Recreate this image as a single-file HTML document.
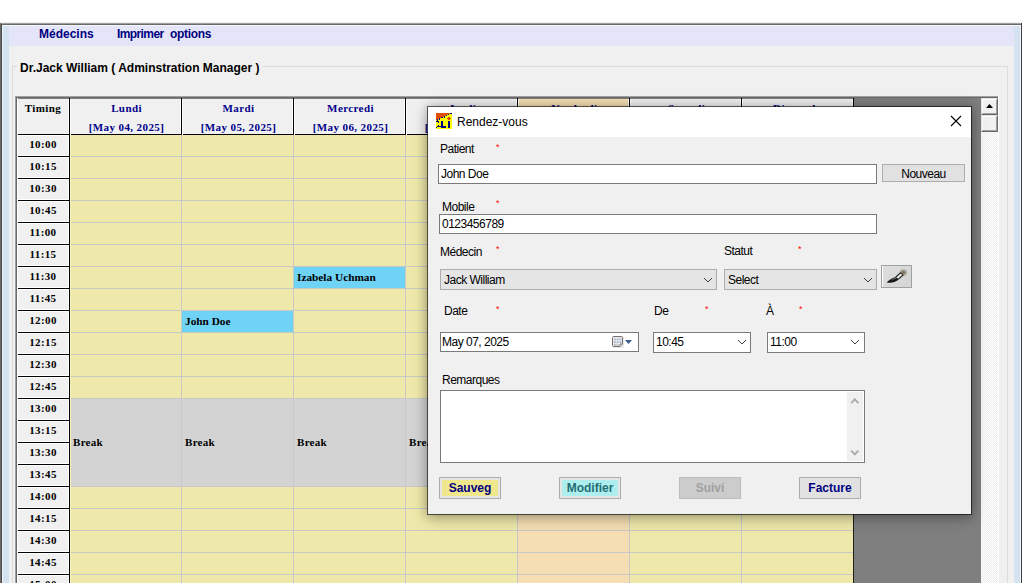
<!DOCTYPE html>
<html><head><meta charset="utf-8"><style>
html,body{margin:0;padding:0;}
body{width:1022px;height:583px;overflow:hidden;position:relative;background:#fff;font-family:"Liberation Sans",sans-serif;}
div{box-sizing:border-box;}
.s{font-family:"Liberation Serif",serif;font-weight:bold;font-size:11px;line-height:14px;position:absolute;white-space:pre;}
.l{font-family:"Liberation Sans",sans-serif;font-size:12px;letter-spacing:-0.5px;line-height:14px;position:absolute;white-space:pre;color:#000;}
.ast{position:absolute;color:#ff0000;font-family:"Liberation Sans",sans-serif;font-size:9px;line-height:9px;}
</style></head><body>

<div style="position:absolute;left:0px;top:22px;width:1022px;height:1px;background:#f0f0f0"></div>
<div style="position:absolute;left:0px;top:23px;width:1022px;height:1px;background:#a0a0a0"></div>
<div style="position:absolute;left:0px;top:23px;width:1px;height:560px;background:#6a6a6a"></div>
<div style="position:absolute;left:1px;top:24px;width:1020px;height:1px;background:#696969"></div>
<div style="position:absolute;left:1px;top:24px;width:1px;height:559px;background:#4a4a4a"></div>
<div style="position:absolute;left:1021px;top:23px;width:1px;height:560px;background:#404040"></div>
<div style="position:absolute;left:2px;top:25px;width:1019px;height:1px;background:#f4f6fe"></div>
<div style="position:absolute;left:2px;top:25px;width:1px;height:558px;background:#f0f4ff"></div>
<div style="position:absolute;left:1020px;top:25px;width:1px;height:558px;background:#f0f4ff"></div>
<div style="position:absolute;left:3px;top:26px;width:6px;height:557px;background:#d5e3f0"></div>
<div style="position:absolute;left:1014px;top:26px;width:6px;height:557px;background:#d5e3f0"></div>
<div style="position:absolute;left:9px;top:26px;width:1005px;height:20px;background:#e5e5f9"></div>
<div style="position:absolute;left:9px;top:46px;width:1005px;height:537px;background:#f0f0f0"></div>
<div style="position:absolute;left:39px;top:27px;font-family:'Liberation Sans',sans-serif;font-weight:bold;font-size:12px;line-height:14px;color:#000080;white-space:pre;">Médecins</div>
<div style="position:absolute;left:117px;top:27px;font-family:'Liberation Sans',sans-serif;font-weight:bold;font-size:12px;letter-spacing:-0.6px;line-height:14px;color:#000080;white-space:pre;">Imprimer</div>
<div style="position:absolute;left:170px;top:27px;font-family:'Liberation Sans',sans-serif;font-weight:bold;font-size:12px;letter-spacing:-0.3px;line-height:14px;color:#000080;white-space:pre;">options</div>
<div style="position:absolute;left:12px;top:66px;width:996px;height:1px;background:#dcdcdc"></div>
<div style="position:absolute;left:12px;top:66px;width:1px;height:517px;background:#dcdcdc"></div>
<div style="position:absolute;left:1007px;top:66px;width:1px;height:517px;background:#dcdcdc"></div>
<div style="position:absolute;left:17px;top:61px;padding:0 2px 0 3px;background:#f0f0f0;font-family:'Liberation Sans',sans-serif;font-weight:bold;font-size:12px;line-height:14px;color:#000;white-space:pre;">Dr.Jack William ( Adminstration Manager )</div>
<div style="position:absolute;left:15px;top:96px;width:984px;height:1px;background:#a0a0a0"></div>
<div style="position:absolute;left:15px;top:97px;width:983px;height:1px;background:#696969"></div>
<div style="position:absolute;left:15px;top:96px;width:1px;height:487px;background:#a0a0a0"></div>
<div style="position:absolute;left:16px;top:97px;width:1px;height:486px;background:#696969"></div>
<div style="position:absolute;left:998px;top:96px;width:1px;height:487px;background:#ffffff"></div>
<div style="position:absolute;left:17px;top:98px;width:837px;height:1px;background:#ffffff"></div>
<div style="position:absolute;left:17px;top:98px;width:1px;height:485px;background:#ffffff"></div>
<div style="position:absolute;left:18px;top:98px;width:980px;height:485px;background:#7f7f7f"></div>
<div style="position:absolute;left:18px;top:99px;width:51px;height:484px;background:#f0f0f0"></div>
<div style="position:absolute;left:70px;top:99px;width:111px;height:35px;background:#f0f0f0"></div>
<div style="position:absolute;left:70px;top:99px;width:1px;height:36px;background:#ffffff"></div>
<div style="position:absolute;left:180px;top:99px;width:1px;height:35px;background:#ffffff"></div>
<div style="position:absolute;left:181px;top:98px;width:1px;height:36px;background:#000"></div>
<div style="position:absolute;left:71px;top:101px;width:111px;text-align:center;white-space:pre;font-family:'Liberation Serif',serif;font-weight:bold;font-size:11px;letter-spacing:0.4px;line-height:14px;color:#00008b;">Lundi</div>
<div style="position:absolute;left:71px;top:120px;width:111px;text-align:center;white-space:pre;font-family:'Liberation Serif',serif;font-weight:bold;font-size:11px;letter-spacing:0.4px;line-height:14px;color:#00008b;">[May 04, 2025]</div>
<div style="position:absolute;left:182px;top:99px;width:111px;height:35px;background:#f0f0f0"></div>
<div style="position:absolute;left:182px;top:99px;width:1px;height:36px;background:#ffffff"></div>
<div style="position:absolute;left:292px;top:99px;width:1px;height:35px;background:#ffffff"></div>
<div style="position:absolute;left:293px;top:98px;width:1px;height:36px;background:#000"></div>
<div style="position:absolute;left:183px;top:101px;width:111px;text-align:center;white-space:pre;font-family:'Liberation Serif',serif;font-weight:bold;font-size:11px;letter-spacing:0.4px;line-height:14px;color:#00008b;">Mardi</div>
<div style="position:absolute;left:183px;top:120px;width:111px;text-align:center;white-space:pre;font-family:'Liberation Serif',serif;font-weight:bold;font-size:11px;letter-spacing:0.4px;line-height:14px;color:#00008b;">[May 05, 2025]</div>
<div style="position:absolute;left:294px;top:99px;width:111px;height:35px;background:#f0f0f0"></div>
<div style="position:absolute;left:294px;top:99px;width:1px;height:36px;background:#ffffff"></div>
<div style="position:absolute;left:404px;top:99px;width:1px;height:35px;background:#ffffff"></div>
<div style="position:absolute;left:405px;top:98px;width:1px;height:36px;background:#000"></div>
<div style="position:absolute;left:295px;top:101px;width:111px;text-align:center;white-space:pre;font-family:'Liberation Serif',serif;font-weight:bold;font-size:11px;letter-spacing:0.4px;line-height:14px;color:#00008b;">Mercredi</div>
<div style="position:absolute;left:295px;top:120px;width:111px;text-align:center;white-space:pre;font-family:'Liberation Serif',serif;font-weight:bold;font-size:11px;letter-spacing:0.4px;line-height:14px;color:#00008b;">[May 06, 2025]</div>
<div style="position:absolute;left:406px;top:99px;width:111px;height:35px;background:#f0f0f0"></div>
<div style="position:absolute;left:406px;top:99px;width:1px;height:36px;background:#ffffff"></div>
<div style="position:absolute;left:516px;top:99px;width:1px;height:35px;background:#ffffff"></div>
<div style="position:absolute;left:517px;top:98px;width:1px;height:36px;background:#000"></div>
<div style="position:absolute;left:407px;top:101px;width:111px;text-align:center;white-space:pre;font-family:'Liberation Serif',serif;font-weight:bold;font-size:11px;letter-spacing:0.4px;line-height:14px;color:#00008b;">Jeudi</div>
<div style="position:absolute;left:407px;top:120px;width:111px;text-align:center;white-space:pre;font-family:'Liberation Serif',serif;font-weight:bold;font-size:11px;letter-spacing:0.4px;line-height:14px;color:#00008b;">[May 07, 2025]</div>
<div style="position:absolute;left:518px;top:99px;width:111px;height:35px;background:#f5deb3"></div>
<div style="position:absolute;left:518px;top:99px;width:1px;height:36px;background:#ffffff"></div>
<div style="position:absolute;left:628px;top:99px;width:1px;height:35px;background:#ffffff"></div>
<div style="position:absolute;left:629px;top:98px;width:1px;height:36px;background:#000"></div>
<div style="position:absolute;left:519px;top:101px;width:111px;text-align:center;white-space:pre;font-family:'Liberation Serif',serif;font-weight:bold;font-size:11px;letter-spacing:0.4px;line-height:14px;color:#00008b;">Vendredi</div>
<div style="position:absolute;left:519px;top:120px;width:111px;text-align:center;white-space:pre;font-family:'Liberation Serif',serif;font-weight:bold;font-size:11px;letter-spacing:0.4px;line-height:14px;color:#00008b;">[May 08, 2025]</div>
<div style="position:absolute;left:630px;top:99px;width:111px;height:35px;background:#f0f0f0"></div>
<div style="position:absolute;left:630px;top:99px;width:1px;height:36px;background:#ffffff"></div>
<div style="position:absolute;left:740px;top:99px;width:1px;height:35px;background:#ffffff"></div>
<div style="position:absolute;left:741px;top:98px;width:1px;height:36px;background:#000"></div>
<div style="position:absolute;left:631px;top:101px;width:111px;text-align:center;white-space:pre;font-family:'Liberation Serif',serif;font-weight:bold;font-size:11px;letter-spacing:0.4px;line-height:14px;color:#00008b;">Samedi</div>
<div style="position:absolute;left:631px;top:120px;width:111px;text-align:center;white-space:pre;font-family:'Liberation Serif',serif;font-weight:bold;font-size:11px;letter-spacing:0.4px;line-height:14px;color:#00008b;">[May 09, 2025]</div>
<div style="position:absolute;left:742px;top:99px;width:111px;height:35px;background:#f0f0f0"></div>
<div style="position:absolute;left:742px;top:99px;width:1px;height:36px;background:#ffffff"></div>
<div style="position:absolute;left:852px;top:99px;width:1px;height:35px;background:#ffffff"></div>
<div style="position:absolute;left:853px;top:98px;width:1px;height:36px;background:#000"></div>
<div style="position:absolute;left:743px;top:101px;width:111px;text-align:center;white-space:pre;font-family:'Liberation Serif',serif;font-weight:bold;font-size:11px;letter-spacing:0.4px;line-height:14px;color:#00008b;">Dimanche</div>
<div style="position:absolute;left:743px;top:120px;width:111px;text-align:center;white-space:pre;font-family:'Liberation Serif',serif;font-weight:bold;font-size:11px;letter-spacing:0.4px;line-height:14px;color:#00008b;">[May 10, 2025]</div>
<div style="position:absolute;left:18px;top:134px;width:836px;height:1px;background:#000"></div>
<div style="position:absolute;left:70px;top:134px;width:1px;height:1px;background:#ffffff"></div>
<div style="position:absolute;left:182px;top:134px;width:1px;height:1px;background:#ffffff"></div>
<div style="position:absolute;left:294px;top:134px;width:1px;height:1px;background:#ffffff"></div>
<div style="position:absolute;left:406px;top:134px;width:1px;height:1px;background:#ffffff"></div>
<div style="position:absolute;left:518px;top:134px;width:1px;height:1px;background:#ffffff"></div>
<div style="position:absolute;left:630px;top:134px;width:1px;height:1px;background:#ffffff"></div>
<div style="position:absolute;left:742px;top:134px;width:1px;height:1px;background:#ffffff"></div>
<div style="position:absolute;left:69px;top:98px;width:1px;height:485px;background:#000"></div>
<div style="position:absolute;left:68px;top:99px;width:1px;height:484px;background:#fff"></div>
<div style="position:absolute;left:68px;top:134px;width:1px;height:1px;background:#000"></div>
<div style="position:absolute;left:17px;top:101px;width:52px;text-align:center;white-space:pre;font-family:'Liberation Serif',serif;font-weight:bold;font-size:11px;letter-spacing:0.4px;line-height:14px;color:#000;">Timing</div>
<div style="position:absolute;left:18px;top:135px;width:50px;height:1px;background:#fff"></div>
<div style="position:absolute;left:18px;top:155px;width:50px;height:1px;background:#fff"></div>
<div style="position:absolute;left:18px;top:156px;width:51px;height:1px;background:#000"></div>
<div style="position:absolute;left:17px;top:137px;width:52px;text-align:center;white-space:pre;font-family:'Liberation Serif',serif;font-weight:bold;font-size:11px;letter-spacing:0.4px;line-height:14px;color:#000;">10:00</div>
<div style="position:absolute;left:18px;top:157px;width:50px;height:1px;background:#fff"></div>
<div style="position:absolute;left:18px;top:177px;width:50px;height:1px;background:#fff"></div>
<div style="position:absolute;left:18px;top:178px;width:51px;height:1px;background:#000"></div>
<div style="position:absolute;left:17px;top:159px;width:52px;text-align:center;white-space:pre;font-family:'Liberation Serif',serif;font-weight:bold;font-size:11px;letter-spacing:0.4px;line-height:14px;color:#000;">10:15</div>
<div style="position:absolute;left:18px;top:179px;width:50px;height:1px;background:#fff"></div>
<div style="position:absolute;left:18px;top:199px;width:50px;height:1px;background:#fff"></div>
<div style="position:absolute;left:18px;top:200px;width:51px;height:1px;background:#000"></div>
<div style="position:absolute;left:17px;top:181px;width:52px;text-align:center;white-space:pre;font-family:'Liberation Serif',serif;font-weight:bold;font-size:11px;letter-spacing:0.4px;line-height:14px;color:#000;">10:30</div>
<div style="position:absolute;left:18px;top:201px;width:50px;height:1px;background:#fff"></div>
<div style="position:absolute;left:18px;top:221px;width:50px;height:1px;background:#fff"></div>
<div style="position:absolute;left:18px;top:222px;width:51px;height:1px;background:#000"></div>
<div style="position:absolute;left:17px;top:203px;width:52px;text-align:center;white-space:pre;font-family:'Liberation Serif',serif;font-weight:bold;font-size:11px;letter-spacing:0.4px;line-height:14px;color:#000;">10:45</div>
<div style="position:absolute;left:18px;top:223px;width:50px;height:1px;background:#fff"></div>
<div style="position:absolute;left:18px;top:243px;width:50px;height:1px;background:#fff"></div>
<div style="position:absolute;left:18px;top:244px;width:51px;height:1px;background:#000"></div>
<div style="position:absolute;left:17px;top:225px;width:52px;text-align:center;white-space:pre;font-family:'Liberation Serif',serif;font-weight:bold;font-size:11px;letter-spacing:0.4px;line-height:14px;color:#000;">11:00</div>
<div style="position:absolute;left:18px;top:245px;width:50px;height:1px;background:#fff"></div>
<div style="position:absolute;left:18px;top:265px;width:50px;height:1px;background:#fff"></div>
<div style="position:absolute;left:18px;top:266px;width:51px;height:1px;background:#000"></div>
<div style="position:absolute;left:17px;top:247px;width:52px;text-align:center;white-space:pre;font-family:'Liberation Serif',serif;font-weight:bold;font-size:11px;letter-spacing:0.4px;line-height:14px;color:#000;">11:15</div>
<div style="position:absolute;left:18px;top:267px;width:50px;height:1px;background:#fff"></div>
<div style="position:absolute;left:18px;top:287px;width:50px;height:1px;background:#fff"></div>
<div style="position:absolute;left:18px;top:288px;width:51px;height:1px;background:#000"></div>
<div style="position:absolute;left:17px;top:269px;width:52px;text-align:center;white-space:pre;font-family:'Liberation Serif',serif;font-weight:bold;font-size:11px;letter-spacing:0.4px;line-height:14px;color:#000;">11:30</div>
<div style="position:absolute;left:18px;top:289px;width:50px;height:1px;background:#fff"></div>
<div style="position:absolute;left:18px;top:309px;width:50px;height:1px;background:#fff"></div>
<div style="position:absolute;left:18px;top:310px;width:51px;height:1px;background:#000"></div>
<div style="position:absolute;left:17px;top:291px;width:52px;text-align:center;white-space:pre;font-family:'Liberation Serif',serif;font-weight:bold;font-size:11px;letter-spacing:0.4px;line-height:14px;color:#000;">11:45</div>
<div style="position:absolute;left:18px;top:311px;width:50px;height:1px;background:#fff"></div>
<div style="position:absolute;left:18px;top:331px;width:50px;height:1px;background:#fff"></div>
<div style="position:absolute;left:18px;top:332px;width:51px;height:1px;background:#000"></div>
<div style="position:absolute;left:17px;top:313px;width:52px;text-align:center;white-space:pre;font-family:'Liberation Serif',serif;font-weight:bold;font-size:11px;letter-spacing:0.4px;line-height:14px;color:#000;">12:00</div>
<div style="position:absolute;left:18px;top:333px;width:50px;height:1px;background:#fff"></div>
<div style="position:absolute;left:18px;top:353px;width:50px;height:1px;background:#fff"></div>
<div style="position:absolute;left:18px;top:354px;width:51px;height:1px;background:#000"></div>
<div style="position:absolute;left:17px;top:335px;width:52px;text-align:center;white-space:pre;font-family:'Liberation Serif',serif;font-weight:bold;font-size:11px;letter-spacing:0.4px;line-height:14px;color:#000;">12:15</div>
<div style="position:absolute;left:18px;top:355px;width:50px;height:1px;background:#fff"></div>
<div style="position:absolute;left:18px;top:375px;width:50px;height:1px;background:#fff"></div>
<div style="position:absolute;left:18px;top:376px;width:51px;height:1px;background:#000"></div>
<div style="position:absolute;left:17px;top:357px;width:52px;text-align:center;white-space:pre;font-family:'Liberation Serif',serif;font-weight:bold;font-size:11px;letter-spacing:0.4px;line-height:14px;color:#000;">12:30</div>
<div style="position:absolute;left:18px;top:377px;width:50px;height:1px;background:#fff"></div>
<div style="position:absolute;left:18px;top:397px;width:50px;height:1px;background:#fff"></div>
<div style="position:absolute;left:18px;top:398px;width:51px;height:1px;background:#000"></div>
<div style="position:absolute;left:17px;top:379px;width:52px;text-align:center;white-space:pre;font-family:'Liberation Serif',serif;font-weight:bold;font-size:11px;letter-spacing:0.4px;line-height:14px;color:#000;">12:45</div>
<div style="position:absolute;left:18px;top:399px;width:50px;height:1px;background:#fff"></div>
<div style="position:absolute;left:18px;top:419px;width:50px;height:1px;background:#fff"></div>
<div style="position:absolute;left:18px;top:420px;width:51px;height:1px;background:#000"></div>
<div style="position:absolute;left:17px;top:401px;width:52px;text-align:center;white-space:pre;font-family:'Liberation Serif',serif;font-weight:bold;font-size:11px;letter-spacing:0.4px;line-height:14px;color:#000;">13:00</div>
<div style="position:absolute;left:18px;top:421px;width:50px;height:1px;background:#fff"></div>
<div style="position:absolute;left:18px;top:441px;width:50px;height:1px;background:#fff"></div>
<div style="position:absolute;left:18px;top:442px;width:51px;height:1px;background:#000"></div>
<div style="position:absolute;left:17px;top:423px;width:52px;text-align:center;white-space:pre;font-family:'Liberation Serif',serif;font-weight:bold;font-size:11px;letter-spacing:0.4px;line-height:14px;color:#000;">13:15</div>
<div style="position:absolute;left:18px;top:443px;width:50px;height:1px;background:#fff"></div>
<div style="position:absolute;left:18px;top:463px;width:50px;height:1px;background:#fff"></div>
<div style="position:absolute;left:18px;top:464px;width:51px;height:1px;background:#000"></div>
<div style="position:absolute;left:17px;top:445px;width:52px;text-align:center;white-space:pre;font-family:'Liberation Serif',serif;font-weight:bold;font-size:11px;letter-spacing:0.4px;line-height:14px;color:#000;">13:30</div>
<div style="position:absolute;left:18px;top:465px;width:50px;height:1px;background:#fff"></div>
<div style="position:absolute;left:18px;top:485px;width:50px;height:1px;background:#fff"></div>
<div style="position:absolute;left:18px;top:486px;width:51px;height:1px;background:#000"></div>
<div style="position:absolute;left:17px;top:467px;width:52px;text-align:center;white-space:pre;font-family:'Liberation Serif',serif;font-weight:bold;font-size:11px;letter-spacing:0.4px;line-height:14px;color:#000;">13:45</div>
<div style="position:absolute;left:18px;top:487px;width:50px;height:1px;background:#fff"></div>
<div style="position:absolute;left:18px;top:507px;width:50px;height:1px;background:#fff"></div>
<div style="position:absolute;left:18px;top:508px;width:51px;height:1px;background:#000"></div>
<div style="position:absolute;left:17px;top:489px;width:52px;text-align:center;white-space:pre;font-family:'Liberation Serif',serif;font-weight:bold;font-size:11px;letter-spacing:0.4px;line-height:14px;color:#000;">14:00</div>
<div style="position:absolute;left:18px;top:509px;width:50px;height:1px;background:#fff"></div>
<div style="position:absolute;left:18px;top:529px;width:50px;height:1px;background:#fff"></div>
<div style="position:absolute;left:18px;top:530px;width:51px;height:1px;background:#000"></div>
<div style="position:absolute;left:17px;top:511px;width:52px;text-align:center;white-space:pre;font-family:'Liberation Serif',serif;font-weight:bold;font-size:11px;letter-spacing:0.4px;line-height:14px;color:#000;">14:15</div>
<div style="position:absolute;left:18px;top:531px;width:50px;height:1px;background:#fff"></div>
<div style="position:absolute;left:18px;top:551px;width:50px;height:1px;background:#fff"></div>
<div style="position:absolute;left:18px;top:552px;width:51px;height:1px;background:#000"></div>
<div style="position:absolute;left:17px;top:533px;width:52px;text-align:center;white-space:pre;font-family:'Liberation Serif',serif;font-weight:bold;font-size:11px;letter-spacing:0.4px;line-height:14px;color:#000;">14:30</div>
<div style="position:absolute;left:18px;top:553px;width:50px;height:1px;background:#fff"></div>
<div style="position:absolute;left:18px;top:573px;width:50px;height:1px;background:#fff"></div>
<div style="position:absolute;left:18px;top:574px;width:51px;height:1px;background:#000"></div>
<div style="position:absolute;left:17px;top:555px;width:52px;text-align:center;white-space:pre;font-family:'Liberation Serif',serif;font-weight:bold;font-size:11px;letter-spacing:0.4px;line-height:14px;color:#000;">14:45</div>
<div style="position:absolute;left:18px;top:575px;width:50px;height:1px;background:#fff"></div>
<div style="position:absolute;left:18px;top:595px;width:50px;height:1px;background:#fff"></div>
<div style="position:absolute;left:18px;top:596px;width:51px;height:1px;background:#000"></div>
<div style="position:absolute;left:17px;top:577px;width:52px;text-align:center;white-space:pre;font-family:'Liberation Serif',serif;font-weight:bold;font-size:11px;letter-spacing:0.4px;line-height:14px;color:#000;">15:00</div>
<div style="position:absolute;left:70px;top:135px;width:111px;height:448px;background:#eee8aa"></div>
<div style="position:absolute;left:181px;top:135px;width:1px;height:448px;background:#c8c8c8"></div>
<div style="position:absolute;left:182px;top:135px;width:111px;height:448px;background:#eee8aa"></div>
<div style="position:absolute;left:293px;top:135px;width:1px;height:448px;background:#c8c8c8"></div>
<div style="position:absolute;left:294px;top:135px;width:111px;height:448px;background:#eee8aa"></div>
<div style="position:absolute;left:405px;top:135px;width:1px;height:448px;background:#c8c8c8"></div>
<div style="position:absolute;left:406px;top:135px;width:111px;height:448px;background:#eee8aa"></div>
<div style="position:absolute;left:517px;top:135px;width:1px;height:448px;background:#c8c8c8"></div>
<div style="position:absolute;left:518px;top:135px;width:111px;height:448px;background:#f5deb3"></div>
<div style="position:absolute;left:629px;top:135px;width:1px;height:448px;background:#c8c8c8"></div>
<div style="position:absolute;left:630px;top:135px;width:111px;height:448px;background:#eee8aa"></div>
<div style="position:absolute;left:741px;top:135px;width:1px;height:448px;background:#c8c8c8"></div>
<div style="position:absolute;left:742px;top:135px;width:111px;height:448px;background:#eee8aa"></div>
<div style="position:absolute;left:853px;top:135px;width:1px;height:448px;background:#1e1e1e"></div>
<div style="position:absolute;left:70px;top:156px;width:783px;height:1px;background:#c8c8c8"></div>
<div style="position:absolute;left:70px;top:178px;width:783px;height:1px;background:#c8c8c8"></div>
<div style="position:absolute;left:70px;top:200px;width:783px;height:1px;background:#c8c8c8"></div>
<div style="position:absolute;left:70px;top:222px;width:783px;height:1px;background:#c8c8c8"></div>
<div style="position:absolute;left:70px;top:244px;width:783px;height:1px;background:#c8c8c8"></div>
<div style="position:absolute;left:70px;top:266px;width:783px;height:1px;background:#c8c8c8"></div>
<div style="position:absolute;left:70px;top:288px;width:783px;height:1px;background:#c8c8c8"></div>
<div style="position:absolute;left:70px;top:310px;width:783px;height:1px;background:#c8c8c8"></div>
<div style="position:absolute;left:70px;top:332px;width:783px;height:1px;background:#c8c8c8"></div>
<div style="position:absolute;left:70px;top:354px;width:783px;height:1px;background:#c8c8c8"></div>
<div style="position:absolute;left:70px;top:376px;width:783px;height:1px;background:#c8c8c8"></div>
<div style="position:absolute;left:70px;top:398px;width:783px;height:1px;background:#c8c8c8"></div>
<div style="position:absolute;left:70px;top:486px;width:783px;height:1px;background:#c8c8c8"></div>
<div style="position:absolute;left:70px;top:508px;width:783px;height:1px;background:#c8c8c8"></div>
<div style="position:absolute;left:70px;top:530px;width:783px;height:1px;background:#c8c8c8"></div>
<div style="position:absolute;left:70px;top:552px;width:783px;height:1px;background:#c8c8c8"></div>
<div style="position:absolute;left:70px;top:574px;width:783px;height:1px;background:#c8c8c8"></div>
<div style="position:absolute;left:70px;top:596px;width:783px;height:1px;background:#c8c8c8"></div>
<div style="position:absolute;left:70px;top:399px;width:111px;height:87px;background:#d3d3d3"></div>
<div style="position:absolute;left:73px;top:435px;white-space:pre;font-family:'Liberation Serif',serif;font-weight:bold;font-size:11px;letter-spacing:0.3px;line-height:14px;color:#000;">Break</div>
<div style="position:absolute;left:182px;top:399px;width:111px;height:87px;background:#d3d3d3"></div>
<div style="position:absolute;left:185px;top:435px;white-space:pre;font-family:'Liberation Serif',serif;font-weight:bold;font-size:11px;letter-spacing:0.3px;line-height:14px;color:#000;">Break</div>
<div style="position:absolute;left:294px;top:399px;width:111px;height:87px;background:#d3d3d3"></div>
<div style="position:absolute;left:297px;top:435px;white-space:pre;font-family:'Liberation Serif',serif;font-weight:bold;font-size:11px;letter-spacing:0.3px;line-height:14px;color:#000;">Break</div>
<div style="position:absolute;left:406px;top:399px;width:111px;height:87px;background:#d3d3d3"></div>
<div style="position:absolute;left:409px;top:435px;white-space:pre;font-family:'Liberation Serif',serif;font-weight:bold;font-size:11px;letter-spacing:0.3px;line-height:14px;color:#000;">Break</div>
<div style="position:absolute;left:518px;top:399px;width:111px;height:87px;background:#d3d3d3"></div>
<div style="position:absolute;left:521px;top:435px;white-space:pre;font-family:'Liberation Serif',serif;font-weight:bold;font-size:11px;letter-spacing:0.3px;line-height:14px;color:#000;">Break</div>
<div style="position:absolute;left:630px;top:399px;width:111px;height:87px;background:#d3d3d3"></div>
<div style="position:absolute;left:633px;top:435px;white-space:pre;font-family:'Liberation Serif',serif;font-weight:bold;font-size:11px;letter-spacing:0.3px;line-height:14px;color:#000;">Break</div>
<div style="position:absolute;left:742px;top:399px;width:111px;height:87px;background:#d3d3d3"></div>
<div style="position:absolute;left:745px;top:435px;white-space:pre;font-family:'Liberation Serif',serif;font-weight:bold;font-size:11px;letter-spacing:0.3px;line-height:14px;color:#000;">Break</div>
<div style="position:absolute;left:70px;top:135px;width:1px;height:448px;background:#f8f2bc"></div>
<div style="position:absolute;left:294px;top:267px;width:111px;height:21px;background:#6fd3f5"></div>
<div style="position:absolute;left:297px;top:270px;white-space:pre;font-family:'Liberation Serif',serif;font-weight:bold;font-size:11.3px;line-height:14px;color:#000;">Izabela Uchman</div>
<div style="position:absolute;left:182px;top:311px;width:111px;height:21px;background:#6fd3f5"></div>
<div style="position:absolute;left:185px;top:314px;white-space:pre;font-family:'Liberation Serif',serif;font-weight:bold;font-size:11.3px;line-height:14px;color:#000;">John Doe</div>
<div style="position:absolute;left:981px;top:99px;width:17px;height:484px;background:repeating-conic-gradient(#ececec 0 25%, #ffffff 0 50%) 0 0/2px 2px"></div>
<div style="position:absolute;left:981px;top:98px;width:17px;height:17px;background:#f0f0f0;border-top:1px solid #e3e3e3;border-left:1px solid #e3e3e3;border-right:1px solid #696969;border-bottom:1px solid #696969;"></div>
<div style="position:absolute;left:982px;top:99px;width:15px;height:15px;border-top:1px solid #fff;border-left:1px solid #fff;border-right:1px solid #a0a0a0;border-bottom:1px solid #a0a0a0;"></div>
<svg style="position:absolute;left:985px;top:103px" width="9" height="6"><path d="M1 5 L4.5 1 L8 5 Z" fill="#000"/></svg>
<div style="position:absolute;left:981px;top:115px;width:17px;height:17px;background:#f0f0f0;border-top:1px solid #e3e3e3;border-left:1px solid #e3e3e3;border-right:1px solid #696969;border-bottom:1px solid #696969;"></div>
<div style="position:absolute;left:982px;top:116px;width:15px;height:15px;border-top:1px solid #fff;border-left:1px solid #fff;border-right:1px solid #a0a0a0;border-bottom:1px solid #a0a0a0;"></div>
<div style="position:absolute;left:427px;top:106px;width:545px;height:409px;box-shadow:0 0 10px rgba(0,0,0,0.22), 0 4px 14px rgba(0,0,0,0.22);background:#f0f0f0;border:1px solid rgba(0,0,0,0.6);background-clip:padding-box;"></div>
<div style="position:absolute;left:428px;top:107px;width:543px;height:30px;background:#ffffff"></div>
<svg style="position:absolute;left:436px;top:113px" width="16" height="16" shape-rendering="crispEdges">
<rect x="0" y="0" width="16" height="16" fill="#ffff00"/>
<path d="M0 0 H15 L0 7.5 Z" fill="#e04e00" shape-rendering="auto"/>
<g fill="#000080">
<rect x="1" y="6" width="1" height="2"/><rect x="3" y="5" width="1" height="2"/><rect x="5" y="4" width="2" height="1"/>
<rect x="8" y="3" width="1" height="2"/><rect x="10" y="2" width="1" height="1"/><rect x="12" y="1" width="1" height="1"/><rect x="14" y="0" width="2" height="1"/>
<rect x="0" y="8" width="3" height="1"/><rect x="2" y="9" width="1" height="1"/>
<rect x="2" y="12" width="1" height="1"/><rect x="1" y="13" width="4" height="1"/><rect x="0" y="14" width="1" height="1"/>
<rect x="5" y="8" width="2" height="7"/><rect x="5" y="13" width="5" height="2"/>
<rect x="12" y="8" width="2" height="7"/>
</g>
<g fill="#e04e00"><rect x="12" y="4" width="2" height="3"/><rect x="11" y="5" width="4" height="1"/></g>
</svg>
<div class='l' style="left:457px;top:115px;font-size:12px;letter-spacing:0;line-height:14px;">Rendez-vous</div>
<svg style="position:absolute;left:950px;top:115px" width="12" height="12"><path d="M1 1 L11 11 M11 1 L1 11" stroke="#000" stroke-width="1.1"/></svg>
<div class='l' style='left:440px;top:142px;'>Patient</div>
<div class='ast' style='left:496px;top:143px;'>*</div>
<div style="position:absolute;left:438px;top:164px;width:439px;height:20px;background:#fff;border:1px solid #7a7a7a;"></div>
<div class='l' style='left:441px;top:167px;'>John Doe</div>
<div style="position:absolute;left:882px;top:164px;width:83px;height:18px;background:#e1e1e1;border:1px solid #adadad;"></div>
<div class='l' style='left:882px;top:167px;width:83px;text-align:center;'>Nouveau</div>
<div class='l' style='left:442px;top:200px;'>Mobile</div>
<div class='ast' style='left:496px;top:199px;'>*</div>
<div style="position:absolute;left:439px;top:214px;width:438px;height:20px;background:#fff;border:1px solid #7a7a7a;"></div>
<div class='l' style='left:442px;top:217px;'>0123456789</div>
<div class='l' style='left:440px;top:245px;'>Médecin</div>
<div class='ast' style='left:496px;top:245px;'>*</div>
<div class='l' style='left:724px;top:244px;'>Statut</div>
<div class='ast' style='left:798px;top:245px;'>*</div>
<div style="position:absolute;left:440px;top:269px;width:277px;height:21px;background:#e5e5e5;border:1px solid #adadad;"></div>
<div class='l' style='left:444px;top:273px;'>Jack William</div>
<svg style="position:absolute;left:703px;top:277px" width="10" height="6"><path d="M1 1 L5 5 L9 1" fill="none" stroke="#404040" stroke-width="1"/></svg>
<div style="position:absolute;left:724px;top:269px;width:153px;height:21px;background:#e5e5e5;border:1px solid #adadad;"></div>
<div class='l' style='left:728px;top:273px;'>Select</div>
<svg style="position:absolute;left:863px;top:277px" width="10" height="6"><path d="M1 1 L5 5 L9 1" fill="none" stroke="#404040" stroke-width="1"/></svg>
<div style="position:absolute;left:881px;top:265px;width:31px;height:23px;background:linear-gradient(135deg,#dedede,#d4d4d4);border:1px solid #a0a0a0;box-shadow:inset 1px 0 0 #fff;"></div>
<svg style="position:absolute;left:881px;top:265px" width="31" height="23">
<ellipse cx="22.3" cy="7.6" rx="4" ry="3.6" fill="#5a4632" opacity="0.2"/><ellipse cx="22.3" cy="7.6" rx="2.8" ry="2.5" fill="#5a4632" opacity="0.35"/><ellipse cx="22.3" cy="7.6" rx="1.6" ry="1.4" fill="#5a4632" opacity="0.4"/>
<path d="M14.4 11.6 L19.6 7.0 L22.8 10.2 L17.8 14.4 Z" fill="#2a2a2a"/>
<path d="M15.6 12.2 L19.8 8.5 L21.2 9.9 L17.0 13.5 Z" fill="#f2f2f2"/>
<path d="M5.6 17.4 C8.2 15.2 10.6 13.0 14.6 12.0 L17.8 14.4 C15.0 16.8 11.0 18.4 5.6 17.4 Z" fill="#161616"/>
<path d="M10.5 15.2 C12 14 13.5 13.3 15 13.2" stroke="#8a8a8a" stroke-width="0.8" fill="none"/>
</svg>
<div class='l' style='left:444px;top:304px;'>Date</div>
<div class='ast' style='left:496px;top:305px;'>*</div>
<div class='l' style='left:654px;top:304px;'>De</div>
<div class='ast' style='left:705px;top:305px;'>*</div>
<div class='l' style='left:766px;top:304px;'>À</div>
<div class='ast' style='left:799px;top:305px;'>*</div>
<div style="position:absolute;left:440px;top:332px;width:199px;height:20px;background:#fff;border:1px solid #7a7a7a;"></div>
<div class='l' style='left:442px;top:335px;'>May 07, 2025</div>
<svg style="position:absolute;left:611px;top:335px" width="14" height="14">
<rect x="2" y="2" width="11" height="11" fill="#000" opacity="0.08"/>
<path d="M1.5 2.5 Q1.5 1.5 2.5 1.5 H10.5 Q11.5 1.5 11.5 2.5 V9 L9 11.5 H2.5 Q1.5 11.5 1.5 10.5 Z" fill="#e6eaf2" stroke="#7a6e6a" stroke-width="1"/>
<path d="M11.5 9 L9 9 L9 11.5" fill="#d0d4dc" stroke="#7a6e6a" stroke-width="0.8"/>
<g fill="#b4bac8"><rect x="3" y="3.5" width="1.8" height="1.8"/><rect x="5.7" y="3.5" width="1.8" height="1.8"/><rect x="8.4" y="3.5" width="1.8" height="1.8"/>
<rect x="3" y="6.2" width="1.8" height="1.8"/><rect x="5.7" y="6.2" width="1.8" height="1.8"/><rect x="8.4" y="6.2" width="1.8" height="1.8"/>
<rect x="3" y="8.9" width="1.8" height="1.8"/><rect x="5.7" y="8.9" width="1.8" height="1.8"/></g>
</svg>
<svg style="position:absolute;left:624px;top:339px" width="9" height="6"><path d="M1 1 H8 L4.5 5 Z" fill="#3c5a8c"/></svg>
<div style="position:absolute;left:653px;top:332px;width:98px;height:21px;background:#fff;border:1px solid #7a7a7a;"></div>
<div class='l' style='left:656px;top:335px;'>10:45</div>
<svg style="position:absolute;left:737px;top:339px" width="10" height="6"><path d="M1 1 L5 5 L9 1" fill="none" stroke="#404040" stroke-width="1"/></svg>
<div style="position:absolute;left:767px;top:332px;width:98px;height:21px;background:#fff;border:1px solid #7a7a7a;"></div>
<div class='l' style='left:770px;top:335px;'>11:00</div>
<svg style="position:absolute;left:850px;top:339px" width="10" height="6"><path d="M1 1 L5 5 L9 1" fill="none" stroke="#404040" stroke-width="1"/></svg>
<div class='l' style='left:442px;top:373px;'>Remarques</div>
<div style="position:absolute;left:440px;top:390px;width:425px;height:73px;background:#fff;border:1px solid #7a7a7a;"></div>
<div style="position:absolute;left:847px;top:392px;width:16px;height:69px;background:#f0f0f0"></div>
<svg style="position:absolute;left:850px;top:397px" width="10" height="8"><path d="M1.2 6.2 L4.8 2.4 L8.4 6.2" fill="none" stroke="#a8a8a8" stroke-width="1.8"/></svg>
<svg style="position:absolute;left:850px;top:449px" width="10" height="8"><path d="M1.2 1.6 L4.8 5.4 L8.4 1.6" fill="none" stroke="#a8a8a8" stroke-width="1.8"/></svg>
<div style="position:absolute;left:439px;top:477px;width:62px;height:22px;background:#f0e68c;border:1px solid #adadad;box-shadow:inset 0 0 0 2px #e5e5e5;"></div>
<div style="position:absolute;left:439px;top:481px;width:62px;text-align:center;font-family:'Liberation Sans',sans-serif;font-weight:bold;font-size:12px;line-height:14px;color:#000080;white-space:pre;">Sauveg</div>
<div style="position:absolute;left:559px;top:477px;width:62px;height:22px;background:#afeeee;border:1px solid #adadad;box-shadow:inset 0 0 0 2px #e5e5e5;"></div>
<div style="position:absolute;left:559px;top:481px;width:62px;text-align:center;font-family:'Liberation Sans',sans-serif;font-weight:bold;font-size:12px;line-height:14px;color:#1f6f74;white-space:pre;">Modifier</div>
<div style="position:absolute;left:679px;top:477px;width:62px;height:22px;background:#cccccc;border:1px solid #bcbcbc;box-shadow:inset 0 0 0 2px #cccccc;"></div>
<div style="position:absolute;left:679px;top:481px;width:62px;text-align:center;font-family:'Liberation Sans',sans-serif;font-weight:bold;font-size:12px;line-height:14px;color:#a0a0a0;white-space:pre;">Suivi</div>
<div style="position:absolute;left:799px;top:477px;width:62px;height:22px;background:#e1e1e1;border:1px solid #adadad;box-shadow:inset 0 0 0 2px #e1e1e1;"></div>
<div style="position:absolute;left:799px;top:481px;width:62px;text-align:center;font-family:'Liberation Sans',sans-serif;font-weight:bold;font-size:12px;line-height:14px;color:#000080;white-space:pre;">Facture</div>
</body></html>
